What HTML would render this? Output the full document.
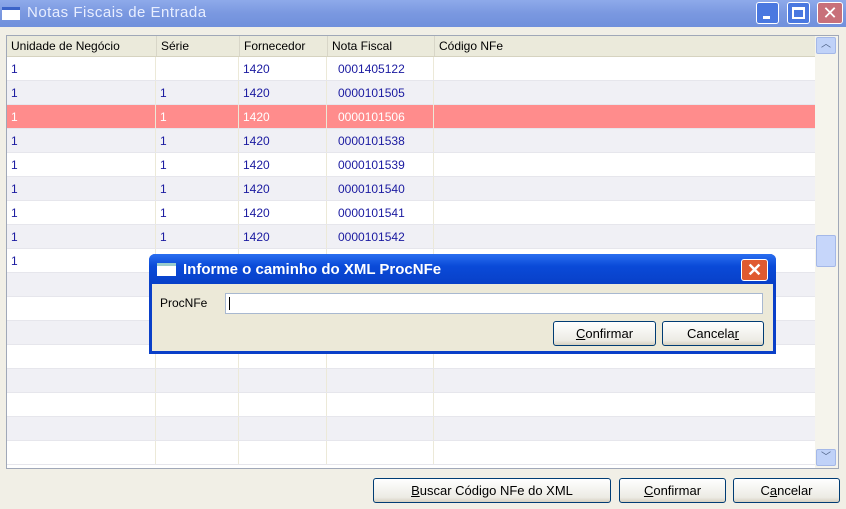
<!DOCTYPE html>
<html><head><style>
*{margin:0;padding:0;box-sizing:border-box}
body{width:846px;height:509px;overflow:hidden;background:#f1efe6;font-family:"Liberation Sans",sans-serif;font-size:12px;position:relative}
.abs{position:absolute}
.title{left:0;top:0;width:846px;height:27px;background:linear-gradient(#8eaaea,#7a98e0 50%,#7090dc);}
.title span{position:absolute;left:27px;top:4px;color:#e8eeff;font-size:15px;letter-spacing:.5px}
.grid{left:6px;top:35px;width:833px;height:434px;border:1px solid #a0a8b8;background:#fff;overflow:hidden}
.hdr{position:absolute;left:0;top:0;width:808px;height:21px;background:#ebeadb;border-bottom:1px solid #d6d3c0}
.hdr div,.row div{position:absolute;top:0;height:100%;padding-left:4px;line-height:21px}
.row{position:absolute;left:0;width:808px;height:24px;border-bottom:1px solid #e6e6ec}
.row div{line-height:24px;color:#1a1aa0;border-right:1px solid #ece9d8}
.btn{position:absolute;height:25px;border:1px solid #003c74;border-radius:3px;background:linear-gradient(#fff,#ecebe4 80%,#d6d0c0);text-align:center;line-height:23px;font-size:13px;color:#000}
</style></head><body>
<div class="abs title"><div class="abs" style="left:2px;top:7px;width:18px;height:13px;background:#fff;border-top:3px solid #3c64c8"></div><span>Notas Fiscais de Entrada</span>
<div class="abs" style="left:756px;top:2px;width:23px;height:22px;background:#4a78e0;border:1px solid #fff;border-radius:3px"><div class="abs" style="left:6px;top:13px;width:7px;height:3px;background:#fff"></div></div>
<div class="abs" style="left:787px;top:2px;width:23px;height:22px;background:#4a78e0;border:1px solid #fff;border-radius:3px"><div class="abs" style="left:4px;top:4px;width:13px;height:12px;border:2px solid #fff;border-top-width:3px"></div></div>
<div class="abs" style="left:817px;top:2px;width:26px;height:22px;background:#c8707a;border:1px solid #fff;border-radius:3px;color:#fff;font-size:18px;text-align:center;line-height:20px">✕</div>
</div>
<div class="abs grid">
<div class="hdr">
<div style="left:0">Unidade de Negócio</div><div style="left:149px;border-left:1px solid #d8d6c8">Série</div><div style="left:232px;border-left:1px solid #d8d6c8">Fornecedor</div><div style="left:320px;border-left:1px solid #d8d6c8">Nota Fiscal</div><div style="left:427px;border-left:1px solid #d8d6c8">Código NFe</div>
</div>
<div id="rows"></div>
<div class="abs" style="left:808px;top:0;width:24px;height:432px;background:#f5f4ec"></div>
<div class="abs" style="left:809px;top:1px;width:20px;height:17px;background:#c0d2f8;border:1px solid #a4b8e8;border-radius:2px;text-align:center;font-size:10px;color:#4d6185;line-height:14px">︿</div>
<div class="abs" style="left:809px;top:199px;width:20px;height:32px;background:#c6d6fa;border:1px solid #a4b8e8;border-radius:2px"></div>
<div class="abs" style="left:809px;top:413px;width:20px;height:17px;background:#c0d2f8;border:1px solid #a4b8e8;border-radius:2px;text-align:center;font-size:10px;color:#4d6185;line-height:16px">﹀</div>
</div>
<script>
var d=[["1","","1420","0001405122"],["1","1","1420","0000101505"],["1","1","1420","0000101506"],["1","1","1420","0000101538"],["1","1","1420","0000101539"],["1","1","1420","0000101540"],["1","1","1420","0000101541"],["1","1","1420","0000101542"],["1","","",""]];
var h="";for(var i=0;i<17;i++){var r=d[i]||["","","",""];var bg=i==2?"#ff8c8c":(i%2?"#f0f0f5":"#fff");var c=i==2?"color:#fff;":"";
h+='<div class="row" style="top:'+(21+i*24)+'px;background:'+bg+'"><div style="left:0;width:149px;'+c+'">'+r[0]+'</div><div style="left:149px;width:83px;'+c+'">'+r[1]+'</div><div style="left:232px;width:88px;'+c+'">'+r[2]+'</div><div style="left:320px;width:107px;padding-left:11px;'+c+'">'+r[3]+'</div></div>';}
document.getElementById("rows").innerHTML=h;
</script>
<div class="btn" style="left:373px;top:478px;width:238px"><u>B</u>uscar Código NFe do XML</div>
<div class="btn" style="left:619px;top:478px;width:107px"><u>C</u>onfirmar</div>
<div class="btn" style="left:733px;top:478px;width:107px">C<u>a</u>ncelar</div>
<div class="abs" style="left:149px;top:254px;width:627px;height:100px;background:#0a3fc8;border-radius:6px 6px 0 0">
<div class="abs" style="left:0;top:0;width:627px;height:30px;background:linear-gradient(#2a6ef0,#0a4ad8 40%,#0840c8);border-radius:6px 6px 0 0"></div>
<div class="abs" style="left:8px;top:9px;width:19px;height:13px;background:#fff;border-top:3px solid #9cc"></div>
<div class="abs" style="left:34px;top:7px;color:#fff;font-size:15px;font-weight:bold">Informe o caminho do XML ProcNFe</div>
<div class="abs" style="left:592px;top:5px;width:27px;height:22px;background:#e05a30;border:1px solid #fff;border-radius:3px;color:#fff;font-size:18px;text-align:center;line-height:20px;font-weight:bold">✕</div>
<div class="abs" style="left:3px;top:30px;width:621px;height:67px;background:#ece9d8"></div>
<div class="abs" style="left:11px;top:42px;font-size:12px">ProcNFe</div>
<div class="abs" style="left:76px;top:39px;width:538px;height:21px;background:#fff;border:1px solid #a8b8d0"><div class="abs" style="left:3px;top:3px;width:1px;height:13px;background:#000"></div></div>
<div class="btn" style="left:404px;top:67px;width:103px;height:25px"><u>C</u>onfirmar</div>
<div class="btn" style="left:513px;top:67px;width:102px;height:25px">Cancela<u>r</u></div>
</div>
</body></html>
